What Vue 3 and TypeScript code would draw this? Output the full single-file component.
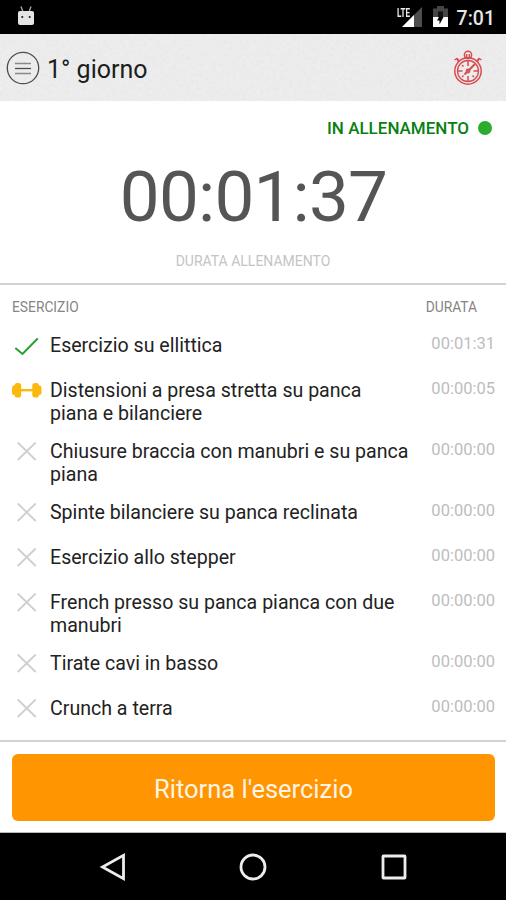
<script setup lang="ts">
type Status = 'done' | 'active' | 'pending'

interface Exercise {
  name: string
  duration: string
  status: Status
}

const exercises: Exercise[] = [
  { name: 'Esercizio su ellittica', duration: '00:01:31', status: 'done' },
  { name: 'Distensioni a presa stretta su panca piana e bilanciere', duration: '00:00:05', status: 'active' },
  { name: 'Chiusure braccia con manubri e su panca piana', duration: '00:00:00', status: 'pending' },
  { name: 'Spinte bilanciere su panca reclinata', duration: '00:00:00', status: 'pending' },
  { name: 'Esercizio allo stepper', duration: '00:00:00', status: 'pending' },
  { name: 'French presso su panca pianca con due manubri', duration: '00:00:00', status: 'pending' },
  { name: 'Tirate cavi in basso', duration: '00:00:00', status: 'pending' },
  { name: 'Crunch a terra', duration: '00:00:00', status: 'pending' },
]
</script>

<template>
  <div class="screen">
    <div class="status-bar">
      <svg class="droid" width="18" height="20" viewBox="0 0 18 20">
        <path d="M4 0.500l1.800 5M14 0.500l-1.800 5" stroke="#a5a5a5" stroke-width="1.400" />
        <path d="M1 6.500Q1 5 3 5h12q2 0 2 1.500V17q0 2-2 2H3q-2 0-2-2z" fill="#e4e4e4" />
        <circle cx="5.300" cy="11" r="1.100" fill="#222" />
        <circle cx="12.700" cy="11" r="1.100" fill="#222" />
      </svg>
      <div class="indicators">
        <div class="signal">
          <span class="lte">LTE</span>
          <svg width="22" height="21" viewBox="0 0 22 21">
            <path d="M21 1v20H1z" fill="#4d4d4d" />
            <path d="M13 9v12H1z" fill="#fff" />
          </svg>
        </div>
        <svg class="battery" width="15" height="21" viewBox="0 0 15 21">
          <path d="M4 0h7v2.500h4V11H0V2.500h4z" fill="#454545" />
          <path d="M5 5.500h5V11H5z" fill="#111" />
          <path d="M0 11h15v10H0z" fill="#fff" />
          <path d="M10.500 11L6.500 18.500V14.500H4L6 11z" fill="#000" />
        </svg>
        <span class="clock">7:01</span>
      </div>
    </div>

    <header class="app-bar">
      <svg class="grain" width="506" height="67">
        <filter id="paper" x="0" y="0" width="100%" height="100%">
          <feTurbulence type="fractalNoise" baseFrequency="0.3" numOctaves="2" seed="4" />
          <feColorMatrix type="saturate" values="0" />
          <feComponentTransfer><feFuncA type="linear" slope="0" intercept="0.07" /></feComponentTransfer>
        </filter>
        <rect width="506" height="67" filter="url(#paper)" />
      </svg>
      <svg class="menu" width="34" height="34" viewBox="0 0 34 34" fill="none">
        <circle cx="17" cy="17" r="15.700" stroke="#444" stroke-width="1.300" />
        <path d="M9 12.500h16M9 22.500h16" stroke="#858585" stroke-width="1.500" />
        <path d="M9 17.500h16" stroke="#444" stroke-width="1.300" />
      </svg>
      <h1>1° giorno</h1>
      <svg class="stopwatch" width="30" height="36" viewBox="0 0 30 36" fill="none" stroke="#d8444a">
        <circle cx="15" cy="21" r="13.200" stroke-width="1.500" />
        <circle cx="15" cy="21" r="10.500" stroke-width="1.300" />
        <circle cx="15" cy="4.800" r="3.600" stroke-width="1.500" />
        <path d="M13.700 4v4M16.300 4v4M11.500 7.800h7M1.500 10l2.500-1.500 2 2M28.500 10l-2.500-1.500-2 2M4 9.500l2 2.500M26 9.500l-2 2.500" stroke-width="1.400" />
        <path d="M15 11v5M15 26v5M5 21h4.500M20.500 21H25M9 15l1.500 1.500M19.500 25.500l1.500 1.500M10.500 25.500L9 27" stroke-width="1.500" />
        <path d="M11.500 24.500L22 14" stroke-width="2" />
        <circle cx="15" cy="21" r="1.800" stroke-width="1.200" />
      </svg>
    </header>

    <main>
      <section class="timer">
        <div class="state"><span>IN ALLENAMENTO</span><i class="dot"></i></div>
        <div class="time">00:01:37</div>
        <div class="caption">DURATA ALLENAMENTO</div>
      </section>

      <section class="list">
        <div class="list-head">
          <span class="head-name">ESERCIZIO</span>
          <span class="head-duration">DURATA</span>
        </div>
        <div v-for="item in exercises" :key="item.name" class="row">
          <div class="mark">
            <svg v-if="item.status === 'done'" width="30" height="24" viewBox="0 0 30 24">
              <path d="M3.300 15L10.500 21L25.700 5.500" fill="none" stroke="#26a02c" stroke-width="2" />
            </svg>
            <svg v-else-if="item.status === 'active'" width="30" height="24" viewBox="0 0 30 24" fill="#fbb90d">
              <path d="M9 11h12v2.400H9z" />
              <rect x="2.500" y="5" width="6.700" height="14.500" rx="2.800" />
              <rect x="0" y="7.500" width="5" height="9.500" rx="2.200" />
              <rect x="20.300" y="5" width="6.700" height="14.500" rx="2.800" />
              <rect x="24.500" y="7.500" width="5" height="9.500" rx="2.200" />
            </svg>
            <svg v-else width="30" height="24" viewBox="0 0 30 24">
              <path d="M5.700 3.500L23.700 21M23.700 3.500L5.700 21" fill="none" stroke="#cfcfcf" stroke-width="1.800" />
            </svg>
          </div>
          <div class="name">{{ item.name }}</div>
          <div class="duration">{{ item.duration }}</div>
        </div>
      </section>

      <footer>
        <button type="button">Ritorna l'esercizio</button>
      </footer>
    </main>

    <nav class="nav-bar">
      <svg width="28" height="30" viewBox="0 0 28 30"><path d="M24.500 3.300v23.400L3.500 15z" /></svg>
      <svg width="28" height="30" viewBox="0 0 28 30"><circle cx="14" cy="15" r="12" /></svg>
      <svg width="28" height="30" viewBox="0 0 28 30"><rect x="3" y="4" width="22" height="22" rx="0.500" /></svg>
    </nav>
  </div>
</template>

<style>
body {
  margin: 0;
  background: #fff;
}
</style>

<style scoped>
.screen {
  width: 506px;
  height: 900px;
  display: flex;
  flex-direction: column;
  overflow: hidden;
  background: #fff;
  font-family: Roboto, "Liberation Sans", sans-serif;
}
.screen svg {
  display: block;
  flex: none;
}
.status-bar {
  height: 34px;
  flex: none;
  box-sizing: border-box;
  padding: 6px 11px 0 17px;
  display: flex;
  justify-content: space-between;
  align-items: flex-start;
  background: #000;
}
.indicators {
  display: flex;
}
.signal {
  display: flex;
  margin-right: 10px;
}
.lte {
  width: 13px;
  margin-right: -9px;
  z-index: 1;
  font-size: 13px;
  line-height: 13px;
  font-weight: 700;
  transform: scaleX(0.62);
  transform-origin: 0 0;
  color: #e8e8e8;
}
.clock {
  margin-left: 9px;
  font-size: 19.500px;
  font-weight: 500;
  line-height: 25px;
  color: #e6e6e6;
}
.app-bar {
  position: relative;
  height: 67px;
  flex: none;
  box-sizing: border-box;
  padding: 0 23px 0 6px;
  display: flex;
  align-items: center;
  background: #efefef;
}
.grain {
  position: absolute;
  inset: 0;
}
h1 {
  margin: 4px auto 0 7px;
  font-size: 25px;
  font-weight: 400;
  line-height: 30px;
  color: #111;
}
main {
  height: 732px;
  flex: none;
  display: flex;
  flex-direction: column;
  border-bottom: 1px solid #bbb;
  box-sizing: border-box;
}
.timer {
  height: 184px;
  flex: none;
  box-sizing: border-box;
  border-bottom: 2px solid #d2d2d2;
  text-align: center;
}
.state {
  display: flex;
  justify-content: flex-end;
  align-items: center;
  gap: 9px;
  padding: 17px 14px 0 0;
  height: 20px;
  font-size: 17px;
  font-weight: 500;
  color: #078010;
}
.dot {
  width: 14px;
  height: 14px;
  border-radius: 50%;
  background: #2aad2e;
}
.time {
  margin-top: 17px;
  padding-left: 1px;
  font-size: 71px;
  line-height: 84px;
  letter-spacing: -0.800px;
  color: #555;
}
.caption {
  margin-top: 13px;
  font-size: 14px;
  line-height: 18px;
  color: #c4c4c4;
}
.list {
  height: 457px;
  flex: none;
  box-sizing: border-box;
  border-bottom: 2px solid #d2d2d2;
}
.list-head {
  display: flex;
  justify-content: space-between;
  height: 41px;
  box-sizing: border-box;
  padding: 13px 29px 0 12px;
  font-size: 13.800px;
  line-height: 18px;
  color: #858585;
}
.row {
  display: flex;
  min-height: 45px;
  box-sizing: border-box;
  padding: 7.500px 11px 7.500px 12px;
}
.mark {
  width: 38px;
  flex: none;
  margin-top: -0.800px;
}
.name {
  width: 364px;
  flex: none;
  font-size: 19.580px;
  line-height: 23px;
  color: #222;
}
.duration {
  margin-left: auto;
  font-size: 16.500px;
  line-height: 20px;
  color: #bdbdbd;
}
footer {
  padding: 12px 11px 0 12px;
}
button {
  display: block;
  width: 100%;
  height: 67px;
  padding: 3px 0 0;
  border: 0;
  border-radius: 6px;
  background: #ff9500;
  font-family: inherit;
  font-size: 25.500px;
  color: #fff4e5;
}
.nav-bar {
  flex: 1;
  display: flex;
  justify-content: center;
  align-items: center;
  gap: 112.500px;
  background: #000;
}
.nav-bar svg {
  fill: none;
  stroke: #ededed;
  stroke-width: 2.800px;
}
</style>
